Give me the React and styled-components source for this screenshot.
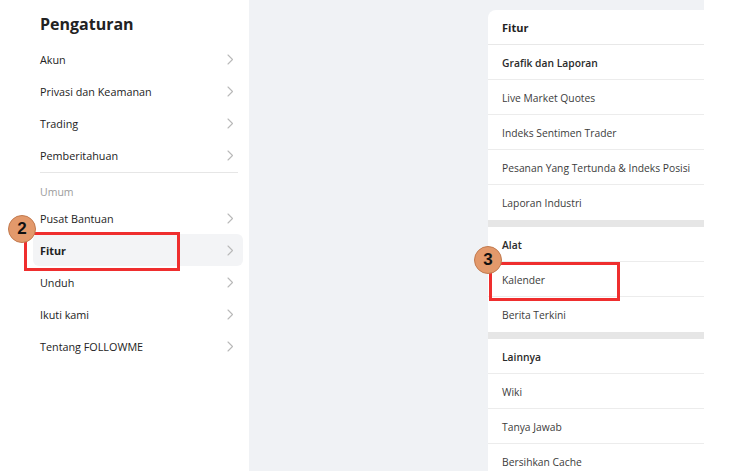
import React from 'react'
import styled, {createGlobalStyle} from 'styled-components'

const GlobalStyle = createGlobalStyle`
  html, body {
    margin: 0;
    padding: 0;
    background: #ffffff;
  }
  body {
    font-family: "Open Sans", "Noto Sans", Arial, sans-serif;
    -webkit-font-smoothing: antialiased;
  }
`

const settingsTop = ["Akun", "Privasi dan Keamanan", "Trading", "Pemberitahuan"]
const settingsGeneral = ["Pusat Bantuan", "Fitur", "Unduh", "Ikuti kami", "Tentang FOLLOWME"]

const featureSections = [
  {title: "Grafik dan Laporan", items: ["Live Market Quotes", "Indeks Sentimen Trader", "Pesanan Yang Tertunda & Indeks Posisi", "Laporan Industri"]},
  {title: "Alat", items: ["Kalender", "Berita Terkini"]},
  {title: "Lainnya", items: ["Wiki", "Tanya Jawab", "Bersihkan Cache"]},
]

const Chevron = () => (
  <svg width="7" height="11" viewBox="0 0 7 11" fill="none">
    <path d="M1 1 L5.5 5.5 L1 10" stroke="#b9b9b9" strokeWidth="1.1" strokeLinecap="round" strokeLinejoin="round" />
  </svg>
)

const App = () => {
  return (
    <Page>
      <GlobalStyle />
      <Sidebar>
        <SidebarTitle>Pengaturan</SidebarTitle>
        {settingsTop.map(label => (
          <MenuRow key={label}>
            <span>{label}</span>
            <Chevron />
          </MenuRow>
        ))}
        <Divider />
        <GroupLabel>Umum</GroupLabel>
        {settingsGeneral.map(label => (
          <MenuRow key={label} $active={label === "Fitur"}>
            <span>{label}</span>
            <Chevron />
          </MenuRow>
        ))}
      </Sidebar>
      <Main>
        <Panel>
          <PanelHeader>Fitur</PanelHeader>
          {featureSections.map((section, i) => (
            <Section key={section.title} $first={i === 0}>
              <ListRow $heading>{section.title}</ListRow>
              {section.items.map(item => (
                <ListRow key={item}>{item}</ListRow>
              ))}
            </Section>
          ))}
        </Panel>
      </Main>
      <Filler />

      <Highlight style={{left: 24, top: 232, width: 156, height: 39}} />
      <Badge style={{left: 8, top: 215}}>2</Badge>
      <Highlight style={{left: 489, top: 262, width: 131, height: 39}} />
      <Badge style={{left: 474, top: 246}}>3</Badge>
    </Page>
  )
}

export default App

const Page = styled.div`
  position: relative;
  display: flex;
  width: 751px;
  height: 471px;
  overflow: hidden;
`

const Sidebar = styled.aside`
  width: 249px;
  flex-shrink: 0;
  box-sizing: border-box;
  padding: 0 6px 0 33px;
  background: #ffffff;
`

const SidebarTitle = styled.h2`
  margin: 0;
  height: 43px;
  box-sizing: border-box;
  padding: 5px 0 0 7px;
  display: flex;
  align-items: center;
  font-size: 16px;
  font-weight: 700;
  color: #222222;
`

const MenuRow = styled.div`
  height: 32px;
  display: flex;
  align-items: center;
  justify-content: space-between;
  padding: 0 9px 0 7px;
  border-radius: 6px;
  background: ${p => (p.$active ? "#f3f4f6" : "transparent")};
  font-size: 10.8px;
  font-weight: ${p => (p.$active ? 700 : 500)};
  color: #222222;
`

const Divider = styled.div`
  height: 1px;
  margin: 1px 5px 9px 7px;
  background: #e6e6e6;
`

const GroupLabel = styled.div`
  height: 20px;
  display: flex;
  align-items: center;
  padding-left: 7px;
  font-size: 10.5px;
  color: #9c9c9c;
`

const Main = styled.main`
  width: 455px;
  flex-shrink: 0;
  box-sizing: border-box;
  padding: 10px 0 0 239px;
  background: #f0f2f5;
`

const Panel = styled.section`
  background: #ffffff;
  border-top-left-radius: 8px;
  height: 100%;
`

const PanelHeader = styled.div`
  height: 35px;
  box-sizing: border-box;
  display: flex;
  align-items: center;
  padding-left: 14px;
  border-bottom: 1px solid #e8e8e8;
  font-size: 11px;
  font-weight: 700;
  color: #222222;
`

const Section = styled.div`
  border-top: ${p => (p.$first ? "none" : "7px solid #e6e6e6")};
  & > div:last-child {
    border-bottom: none;
  }
`

const ListRow = styled.div`
  height: 35px;
  box-sizing: border-box;
  display: flex;
  align-items: center;
  padding: 1px 0 0 14px;
  border-bottom: 1px solid #ececec;
  font-size: 10.3px;
  font-weight: ${p => (p.$heading ? 600 : 400)};
  color: ${p => (p.$heading ? "#2a2a2a" : "#3c3c3c")};
  white-space: nowrap;
`

const Filler = styled.div`
  flex: 1;
  background: #ffffff;
`

const Highlight = styled.div`
  position: absolute;
  box-sizing: border-box;
  border: 3px solid #ef2e2e;
`

const Badge = styled.div`
  position: absolute;
  width: 28px;
  height: 28px;
  box-sizing: border-box;
  border-radius: 50%;
  border: 1px solid #c27a4f;
  background: #e3996b;
  display: flex;
  align-items: center;
  justify-content: center;
  font-family: "Liberation Sans", Arial, sans-serif;
  font-size: 17px;
  font-weight: 700;
  color: #111111;
`
